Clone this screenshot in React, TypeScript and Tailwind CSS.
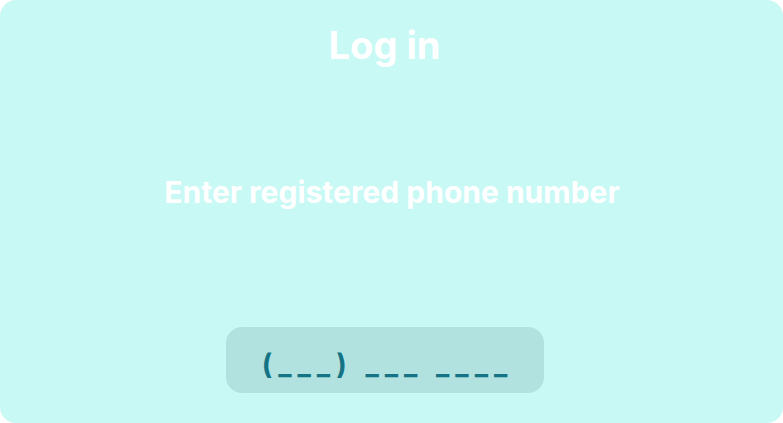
export default function App() {
  return (
    <div className="w-[783px] h-[423px] bg-white" style={{ fontFamily: "Inter, 'Noto Sans', sans-serif" }}>
      <div className="w-full h-full rounded-2xl bg-[#c8f9f5] flex flex-col items-center pr-[14px]">
        <h1 className="mt-[22px] text-[38px] leading-[46px] font-bold text-white">Log in</h1>
        <p className="mt-[106px] ml-[15px] text-[30px] leading-[36px] font-bold text-white">Enter registered phone number</p>
        <div className="mt-[117px] w-[318px] h-[66px] rounded-2xl bg-[#b1e2df] flex items-center justify-center pl-[6px]">
          <span className="text-[28px] leading-[34px] font-bold text-[#147384] tracking-[6px] pt-[8px]">(___) ___ ____</span>
        </div>
      </div>
    </div>
  );
}
